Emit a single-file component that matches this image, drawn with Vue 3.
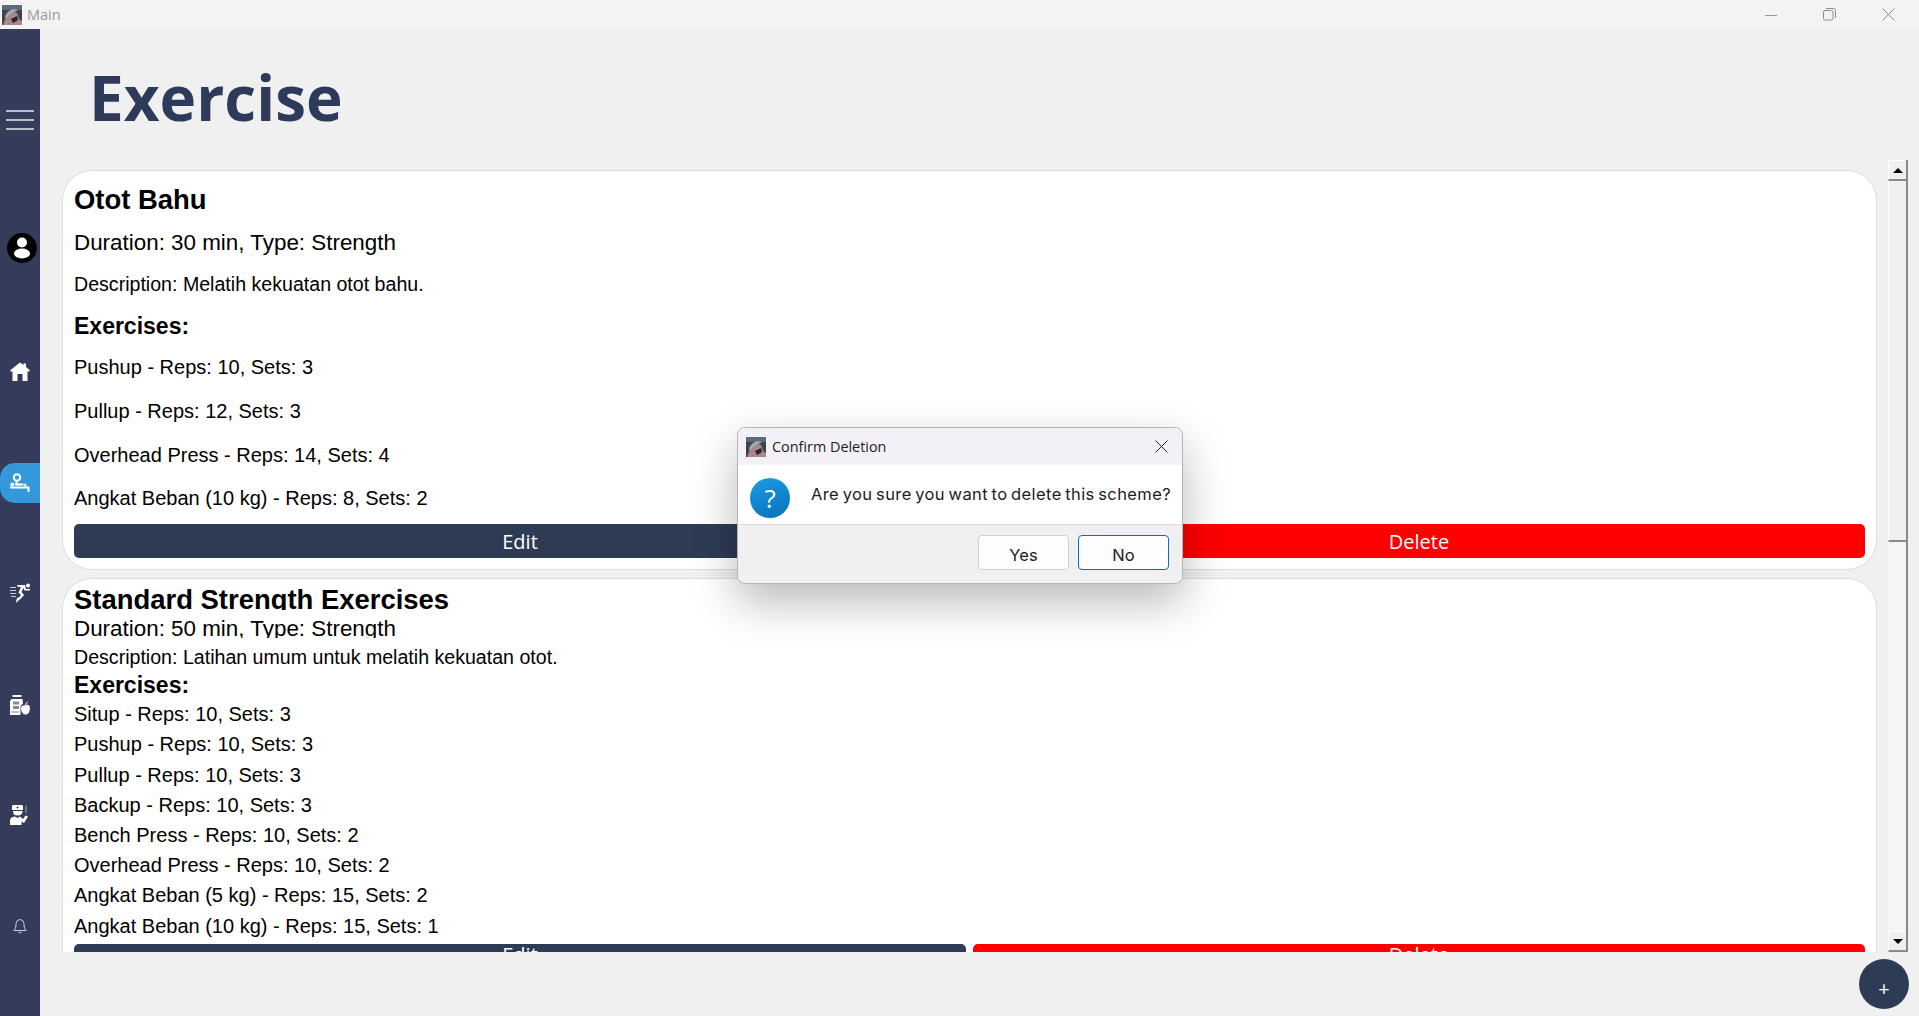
<script setup>
const nav = [
  { key: 'profile', top: true },
  { key: 'home' },
  { key: 'exercise', active: true },
  { key: 'run' },
  { key: 'food' },
  { key: 'doctor' },
  { key: 'bell' }
]
const first = {
  title: 'Otot Bahu',
  meta: 'Duration: 30 min, Type: Strength',
  desc: 'Description: Melatih kekuatan otot bahu.',
  items: ['Pushup - Reps: 10, Sets: 3', 'Pullup - Reps: 12, Sets: 3', 'Overhead Press - Reps: 14, Sets: 4', 'Angkat Beban (10 kg) - Reps: 8, Sets: 2']
}
const second = {
  title: 'Standard Strength Exercises',
  meta: 'Duration: 50 min, Type: Strength',
  desc: 'Description: Latihan umum untuk melatih kekuatan otot.',
  items: ['Situp - Reps: 10, Sets: 3', 'Pushup - Reps: 10, Sets: 3', 'Pullup - Reps: 10, Sets: 3', 'Backup - Reps: 10, Sets: 3', 'Bench Press - Reps: 10, Sets: 2', 'Overhead Press - Reps: 10, Sets: 2', 'Angkat Beban (5 kg) - Reps: 15, Sets: 2', 'Angkat Beban (10 kg) - Reps: 15, Sets: 1']
}
</script>

<template>
  <div class="window">
    <header class="titlebar">
      <svg class="thumb" viewBox="0 0 20 20">
        <rect width="20" height="20" fill="#3f4450"/>
        <rect width="20" height="5" fill="#5d6a78"/>
        <path d="M1 20 L5 10 Q10 4 15 8 L17 14 L20 16 V20Z" fill="#a9868a"/>
        <path d="M3 11 Q8 2 16 5 L12 7 Q7 8 4 14Z" fill="#a6afb6"/>
        <path d="M9 14 L15 11 L16 15 L11 18Z" fill="#2d2428"/>
      </svg>
      <span class="app-name">Main</span>
      <div class="win-controls">
        <svg width="12" height="12" viewBox="0 0 12 12"><path d="M0 6.5H12" stroke="#9a9a9a"/></svg>
        <svg width="13" height="13" viewBox="0 0 13 13" fill="none" stroke="#8c8c8c"><rect x="0.5" y="2.5" width="9.5" height="9.5" rx="1.5"/><path d="M3 .5H10.5Q12.5.5 12.5 2.5V10"/></svg>
        <svg width="13" height="13" viewBox="0 0 13 13"><path d="M.5.5L12.5 12.5M12.5.5L.5 12.5" stroke="#8c8c8c"/></svg>
      </div>
    </header>

    <div class="shell">
      <aside class="sidebar">
        <button class="burger" aria-label="menu"><i></i><i></i><i></i></button>
        <div v-for="n in nav" :key="n.key" class="nav-item" :class="[n.key, { active: n.active }]">
          <svg v-if="n.key === 'profile'" width="30" height="30" viewBox="0 0 30 30">
            <circle cx="15" cy="15" r="15" fill="#000"/>
            <circle cx="15" cy="9.5" r="5" fill="#fff"/>
            <ellipse cx="15" cy="20.5" rx="8" ry="5" fill="#fff"/>
          </svg>
          <svg v-else-if="n.key === 'home'" width="20" height="20" viewBox="0 0 20 20" fill="#fff">
            <path d="M10 0.5L13.5 3V1.5H16V5L20 8.5L19 9.5H17.5V19H12.5V12H7.5V19H2.5V9.5H1L0 8.5Z"/>
          </svg>
          <svg v-else-if="n.key === 'exercise'" width="20" height="20" viewBox="0 0 20 20" fill="none">
            <circle cx="7" cy="4.5" r="3.2" stroke="#fff" stroke-width="2"/>
            <circle cx="2.3" cy="11.5" r="2" fill="#fff"/>
            <path d="M6.5 8V11.5H12" stroke="#fff" stroke-width="2"/>
            <path d="M0 14.5H18.5V19" stroke="#fff" stroke-width="2"/>
            <path d="M5 11.5H15.5V14" stroke="#fff" stroke-width="1.6"/>
          </svg>
          <svg v-else-if="n.key === 'run'" width="20" height="20" viewBox="0 0 20 20" fill="#fff">
            <circle cx="18" cy="2.5" r="2"/>
            <path d="M0 4H6V5H0ZM0 7H6V8H0ZM0 10H6V11H0ZM1 13H6V14H1Z" opacity=".75"/>
            <path d="M7 2H15L16 6H20V7.5H14.5L13.5 5L11.5 9L14 12L10 16.5L8.5 15.5L11 12L8.5 9.5L11 4H8Z"/>
            <path d="M8 14L10 16L6.5 19.5H6L6.5 16.5Z"/>
          </svg>
          <svg v-else-if="n.key === 'food'" width="20" height="20" viewBox="0 0 20 20" fill="#fff">
            <rect x="2.5" y="0" width="9" height="2"/>
            <path d="M1.5 4H12.5L13 8.5Q11 9.5 10.5 12V20H0V6Z"/>
            <rect x="3" y="6.5" width="6" height="3" fill="#353b5a" opacity=".6"/>
            <rect x="3" y="11" width="6" height="3" fill="#353b5a" opacity=".6"/>
            <path d="M1 16.5H9V17.5H1Z" fill="#353b5a" opacity=".6"/>
            <path d="M15.5 10.5Q18 9 19.5 11Q20.5 14 19 17.5Q17.5 20 15.5 19.5Q13.5 20 12 17.5Q10.5 14 11.5 11.5Q13.5 9.5 15.5 10.5Z"/>
            <path d="M15.5 10Q16 7.5 18 7" stroke="#fff" fill="none"/>
          </svg>
          <svg v-else-if="n.key === 'doctor'" width="20" height="20" viewBox="0 0 20 20" fill="#fff">
            <path d="M3 0H12Q13 0 13 1.5V5H2V1.5Q2 0 3 0Z"/>
            <path d="M6.5 2.5H8.5M7.5 1.5V3.5" stroke="#353b5a"/>
            <path d="M3 6H12.5Q12.5 10.5 7.5 10.5Q3 10.5 3 6Z"/>
            <path d="M16 0.5V8" stroke="#aaa" stroke-width="1"/>
            <path d="M0 20V15.5Q0 12 5 11.5L7.5 13L10 11.5L13 14L15.5 10.5L18 11.5L14 18L11.5 16.5V20Z"/>
          </svg>
          <svg v-else-if="n.key === 'bell'" width="14" height="15" viewBox="0 0 14 15" fill="none" stroke="#cfd2dc">
            <path d="M1 11.5Q3 10 3 6V4.5Q3.5 .5 7 .5Q10.5 .5 11 4.5V6Q11 10 13 11.5Z"/>
            <path d="M5.5 13Q7 15 8.5 13"/>
          </svg>
        </div>
      </aside>

      <main class="content">
        <h1 class="page-title">Exercise</h1>
        <div class="scroller">
          <div class="list">
            <section class="card roomy">
              <h2>{{ first.title }}</h2>
              <h3>{{ first.meta }}</h3>
              <p class="desc">{{ first.desc }}</p>
              <h4>Exercises:</h4>
              <p v-for="it in first.items" :key="it" class="item">{{ it }}</p>
              <div class="actions">
                <button class="btn edit">Edit</button>
                <button class="btn del">Delete</button>
              </div>
            </section>
            <section class="card tight">
              <h2>{{ second.title }}</h2>
              <h3>{{ second.meta }}</h3>
              <p class="desc">{{ second.desc }}</p>
              <h4>Exercises:</h4>
              <p v-for="it in second.items" :key="it" class="item">{{ it }}</p>
              <div class="actions">
                <button class="btn edit">Edit</button>
                <button class="btn del">Delete</button>
              </div>
            </section>
          </div>
          <div class="scrollbar">
            <div class="sb-btn"><span class="tri up"></span></div>
            <div class="sb-thumb"></div>
            <div class="sb-track"></div>
            <div class="sb-btn"><span class="tri down"></span></div>
          </div>
        </div>
      </main>
    </div>

    <button class="fab">+</button>

    <div class="dialog">
      <div class="dlg-head">
        <svg class="thumb" viewBox="0 0 20 20">
          <rect width="20" height="20" fill="#3f4450"/>
          <rect width="20" height="5" fill="#5d6a78"/>
          <path d="M1 20 L5 10 Q10 4 15 8 L17 14 L20 16 V20Z" fill="#a9868a"/>
          <path d="M3 11 Q8 2 16 5 L12 7 Q7 8 4 14Z" fill="#a6afb6"/>
          <path d="M9 14 L15 11 L16 15 L11 18Z" fill="#2d2428"/>
        </svg>
        <span class="dlg-title">Confirm Deletion</span>
        <svg class="dlg-close" width="13" height="13" viewBox="0 0 13 13"><path d="M.5.5L12.5 12.5M12.5.5L.5 12.5" stroke="#222" stroke-width="1"/></svg>
      </div>
      <div class="dlg-body">
        <div class="qmark">?</div>
        <span class="dlg-msg">Are you sure you want to delete this scheme?</span>
      </div>
      <div class="dlg-foot">
        <button class="dlg-btn">Yes</button>
        <button class="dlg-btn primary">No</button>
      </div>
    </div>
  </div>
</template>

<style>
html, body { margin: 0; padding: 0; overflow: hidden; }
</style>

<style scoped>
.window {
  position: relative;
  height: 1016px;
  display: flex;
  flex-direction: column;
  background: #f0f0f0;
  font-family: "Liberation Sans", Arial, sans-serif;
  overflow: hidden;
}
.titlebar {
  height: 29px;
  flex: none;
  background: #f3f3f3;
  display: flex;
  align-items: center;
  padding: 0 0 0 2px;
}
.thumb { width: 20px; height: 20px; flex: none; }
.app-name {
  margin-left: 5px;
  font: 14.5px "Open Sans", sans-serif;
  color: #9a9a9a;
}
.win-controls {
  margin-left: auto;
  display: flex;
  align-items: center;
  gap: 46px;
  padding-right: 24px;
}
.shell { flex: 1; display: flex; min-height: 0; }
.sidebar {
  width: 40px;
  flex: none;
  background: #353b5a;
  display: flex;
  flex-direction: column;
  align-items: center;
  position: relative;
}
.burger {
  margin: 81px 0 0;
  padding: 0;
  width: 28px;
  height: 20px;
  background: none;
  border: 0;
  display: flex;
  flex-direction: column;
  justify-content: space-between;
}
.burger i { display: block; height: 2px; background: #b9bcc8; }
.nav-item { display: flex; align-items: center; justify-content: center; width: 40px; }
.profile { margin-top: 103px; margin-left: 4px; height: 30px; }
.home { margin-top: 99px; height: 20px; }
.exercise {
  margin-top: 81px;
  height: 40px;
  background: #3498db;
  border-radius: 15px 0 0 15px;
}
.run { margin-top: 80px; height: 20px; }
.food { margin-top: 92px; height: 20px; }
.doctor { margin-top: 90px; height: 20px; }
.bell { margin-top: 94px; height: 15px; }

.content { flex: 1; min-width: 0; display: flex; flex-direction: column; padding-left: 22px; }
.page-title {
  margin: 30px 0 0 27px;
  height: 101px;
  font: 700 62px/76px "Open Sans", sans-serif;
  color: #2e3a59;
}
.scroller {
  height: 792px;
  display: flex;
  padding-right: 11px;
}
.list { flex: 1; min-width: 0; overflow: hidden; padding-top: 10px; display: flex; flex-direction: column; gap: 8px; }
.card {
  flex: none;
  background: #fff;
  border: 1px solid #dcdcdc;
  border-radius: 30px;
  padding: 0 11px;
  color: #000;
}
.card h2, .card h3, .card h4, .card p { margin: 0; overflow: hidden; white-space: nowrap; }
.card h2 { font-size: 27.45px; font-weight: 700; }
.card h3 { font-size: 22.4px; font-weight: 400; }
.card h4 { font-size: 23px; font-weight: 700; }
.card .desc { font-size: 19.6px; }
.card .item { font-size: 20px; }
.roomy h2 { height: 32px; line-height: 32px; margin-top: 13px; }
.roomy h3 { height: 32px; line-height: 32px; margin-top: 11px; }
.roomy .desc { height: 28px; line-height: 28px; margin-top: 11px; }
.roomy h4 { height: 26.5px; line-height: 30px; margin-top: 13px; }
.roomy .item { height: 28px; line-height: 28px; margin-top: 15.7px; }
.roomy .actions { margin-top: 12px; margin-bottom: 11px; }
.tight { height: 480px; }
.tight h2 { height: 26px; line-height: 32px; margin-top: 5px; margin-bottom: 4px; }
.tight h3 { height: 24px; line-height: 30px; margin-bottom: 5px; }
.tight .desc { height: 28px; line-height: 28px; }
.tight h4 { height: 28px; line-height: 28px; }
.tight .item { height: 30.2px; line-height: 30px; }
.tight .actions { margin-top: 3px; }
.actions { display: flex; gap: 7px; }
.btn {
  flex: 1;
  height: 34px;
  border: 0;
  border-radius: 5px;
  color: #fff;
  font: 20px/32px "Open Sans", sans-serif;
  padding: 2px 0 0;
}
.tight .btn { height: 22px; line-height: 22px; padding: 0; }
.edit { background: #2e3b55; }
.del { background: #ff0000; }

.scrollbar {
  width: 18px;
  margin-left: 11px;
  flex: none;
  display: flex;
  flex-direction: column;
  border-right: 2px solid #8a8a8a;
}
.sb-btn {
  height: 18px;
  flex: none;
  background: #f0f0f0;
  border-left: 1px solid #fff;
  border-top: 1px solid #fff;
  border-bottom: 2px solid #8a8a8a;
  display: flex;
  align-items: center;
  justify-content: center;
}
.sb-thumb { height: 358px; flex: none; margin-top: 1px; background: #f0f0f0; border-left: 1px solid #fff; border-bottom: 2px solid #8a8a8a; }
.sb-track {
  flex: 1;
  background: repeating-conic-gradient(#fff 0 25%, #ececec 0 50%) 0 0 / 2px 2px;
}
.tri { width: 0; height: 0; border-left: 5px solid transparent; border-right: 5px solid transparent; }
.tri.up { border-bottom: 5px solid #000; }
.tri.down { border-top: 5px solid #000; }

.fab {
  position: absolute;
  left: 1859px;
  top: 959px;
  width: 50px;
  height: 50px;
  border: 0;
  border-radius: 50%;
  background: #2e3b55;
  color: #fff;
  font: 20px/24px "Open Sans", sans-serif;
  padding: 9px 0 0;
}

.dialog {
  position: absolute;
  left: 737px;
  top: 427px;
  width: 446px;
  height: 157px;
  box-sizing: border-box;
  border: 1px solid #b5b5b5;
  border-radius: 8px;
  background: #f0f0f0;
  overflow: hidden;
  display: flex;
  flex-direction: column;
  box-shadow: 0 18px 45px rgba(0, 0, 0, .28);
  font-family: Inter, "Open Sans", sans-serif;
  color: #1c1c1c;
}
.dlg-head {
  height: 37px;
  flex: none;
  background: #f3f1f7;
  display: flex;
  align-items: center;
  padding: 0 14px 0 8px;
}
.dlg-title { margin-left: 6px; font: 14.4px "Open Sans", sans-serif; color: #222; }
.dlg-close { margin-left: auto; }
.dlg-body {
  height: 60px;
  flex: none;
  box-sizing: border-box;
  background: #fff;
  border-bottom: 1px solid #dfdfdf;
  display: flex;
  align-items: center;
  padding-left: 12px;
}
.qmark {
  width: 40px;
  height: 40px;
  margin-top: 6px;
  border-radius: 50%;
  background: linear-gradient(160deg, #1c9be6, #0a70b8);
  color: #fff;
  text-align: center;
  font: 26px/40px "Open Sans", sans-serif;
}
.dlg-msg {
  margin-left: 21px;
  margin-bottom: 2px;
  font: 16.5px Inter, sans-serif;
  letter-spacing: .4px;
  word-spacing: -1.5px;
  white-space: nowrap;
}
.dlg-foot {
  flex: 1;
  display: flex;
  justify-content: flex-end;
  align-items: flex-start;
  gap: 9px;
  padding: 10px 13px 0 0;
}
.dlg-btn {
  width: 91px;
  height: 35px;
  background: #fdfdfd;
  border: 1px solid #d0d0d0;
  border-radius: 4px;
  font: 16.5px Inter, sans-serif;
  color: #1c1c1c;
  padding: 4px 0 0;
}
.dlg-btn.primary { border-color: #0a6cc4; }
</style>
